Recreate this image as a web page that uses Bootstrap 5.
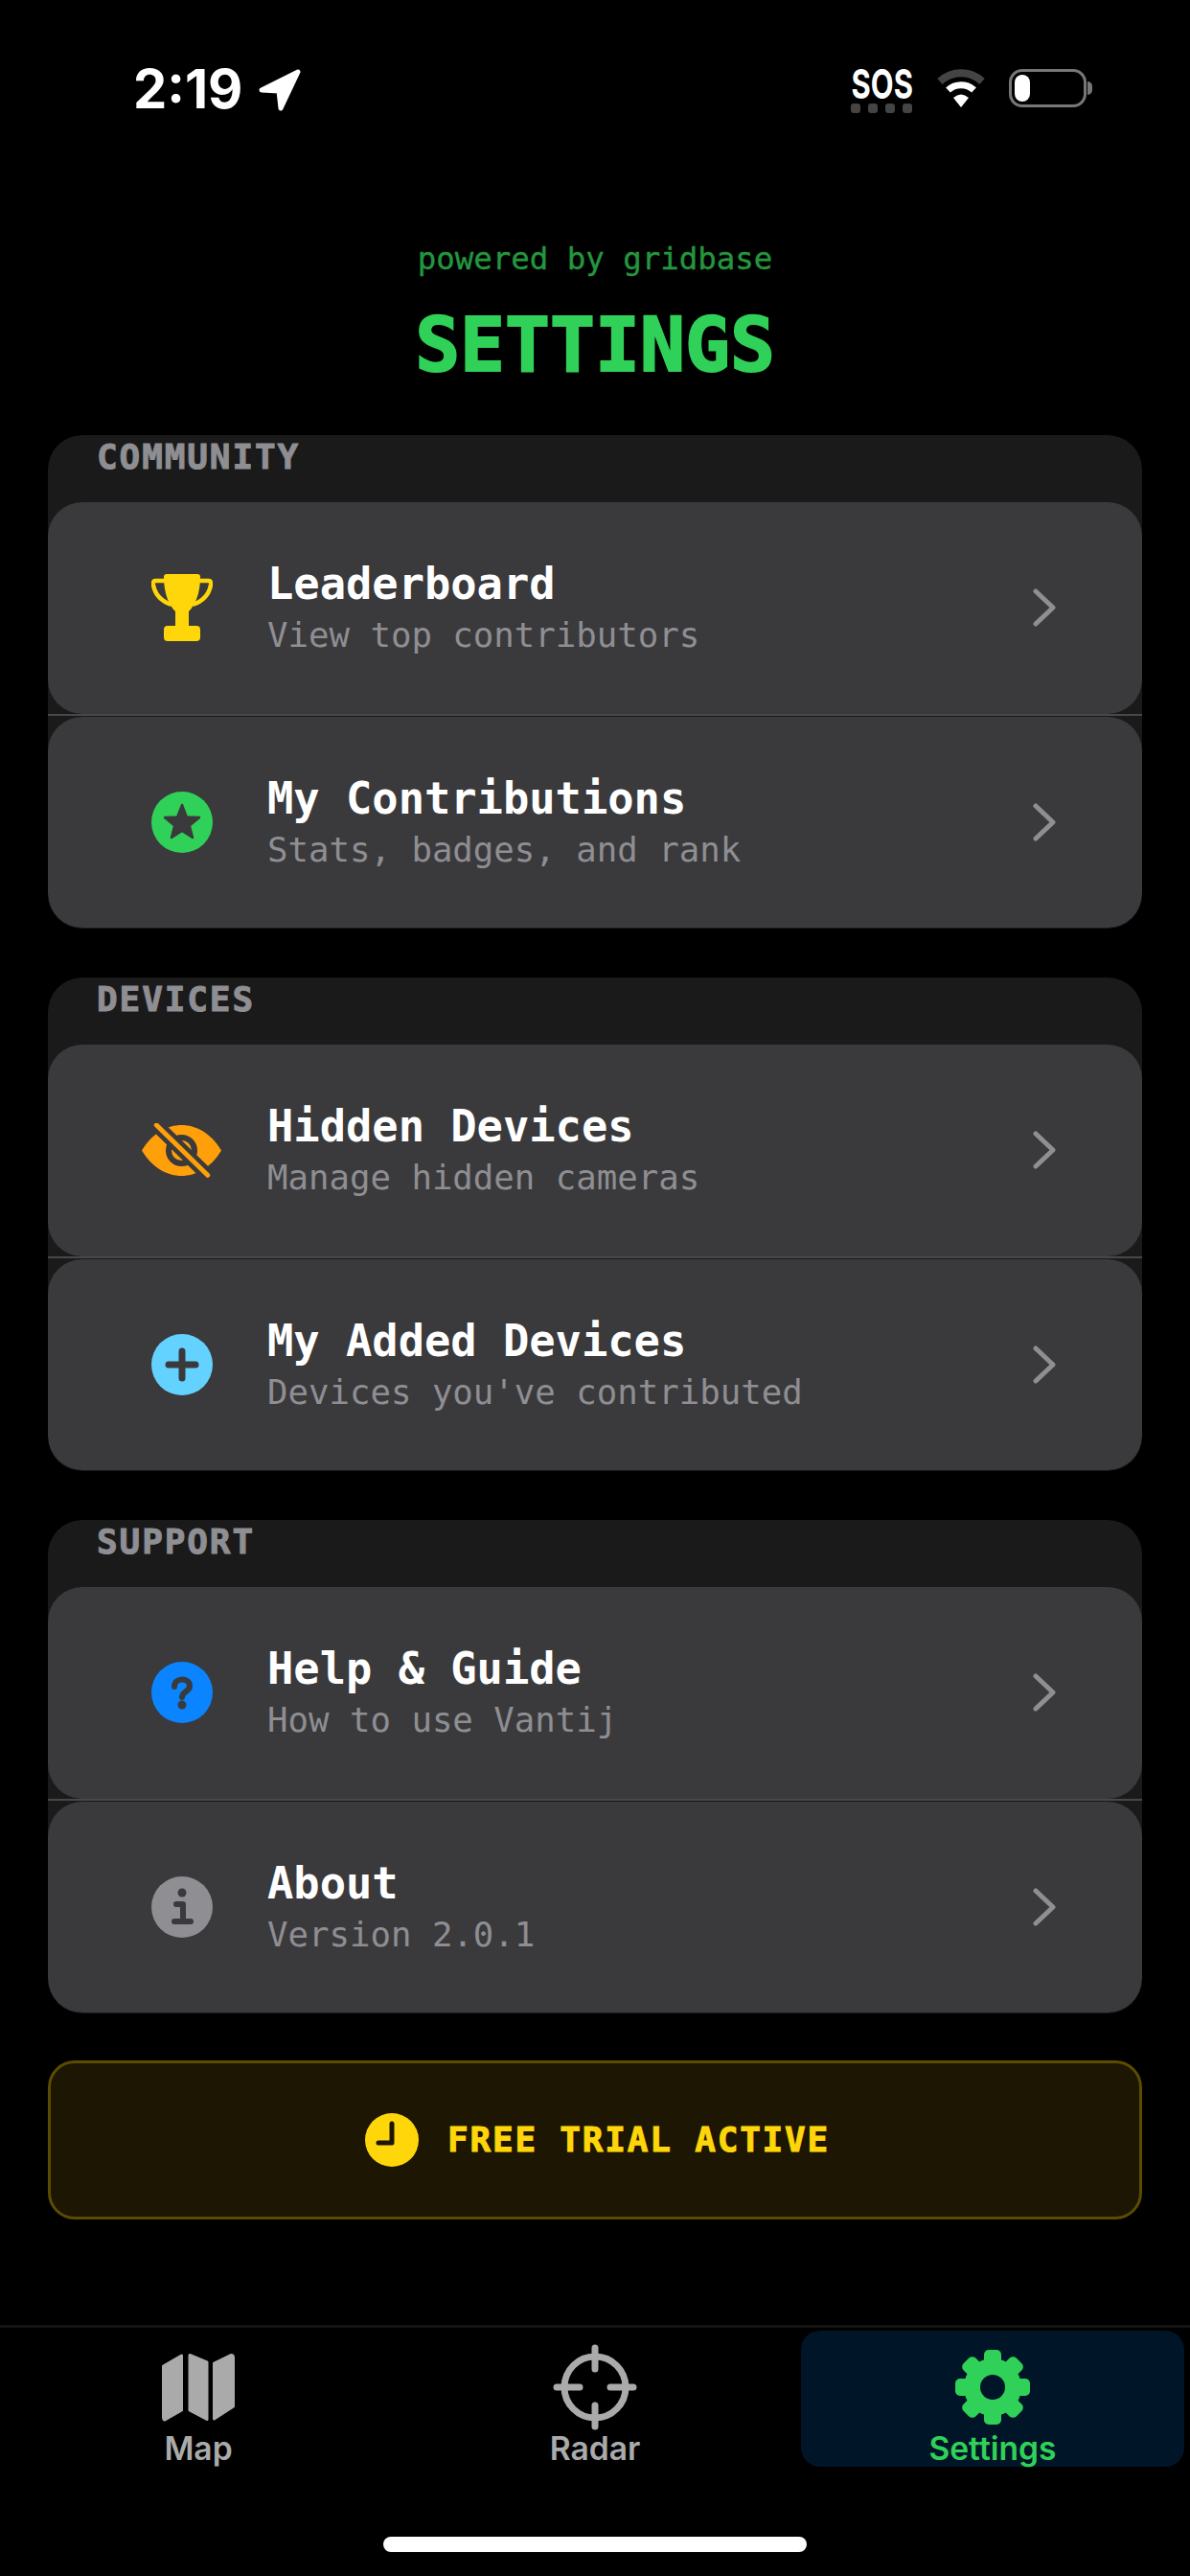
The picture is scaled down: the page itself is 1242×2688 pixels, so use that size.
<!DOCTYPE html>
<html lang="en">
<head>
    <meta charset="UTF-8">
    <meta name="viewport" content="width=device-width, initial-scale=1.0">
    <title>Settings</title>
    <link href="https://cdn.jsdelivr.net/npm/bootstrap@5.3.0/dist/css/bootstrap.min.css" rel="stylesheet">
    <style>
        body {
            background-color: #000;
            margin: 0;
            font-family: "DejaVu Sans Mono", monospace;
        }

        .screen {
            height: 2688px;
        }

        /* status bar */
        .status-row {
            height: 250px;
            padding: 72px 102px 0 139px;
            font-family: Inter, sans-serif;
        }

        .clock-time {
            font-size: 56px;
            font-weight: 700;
            line-height: 42px;
            color: #fff;
        }

        .sos-text {
            font-size: 43px;
            font-weight: 700;
            line-height: 30px;
            color: #fff;
            margin: 0 -12px;
            transform: scaleX(.72);
        }

        .sos-dots {
            gap: 8px;
            margin-top: 6px;
        }

        .sos-dots span {
            width: 10px;
            height: 10px;
            border-radius: 3px;
            background-color: #444;
        }

        .battery-shell {
            width: 81px;
            height: 40px;
            border: 3px solid #777;
            border-radius: 14px;
            padding: 3px;
        }

        .battery-level {
            width: 16px;
            height: 28px;
            background-color: #fff;
            border-radius: 8px;
        }

        .battery-tip {
            width: 5px;
            height: 14px;
            background-color: #777;
            border-radius: 0 6px 6px 0;
            margin-left: 1px;
        }

        /* heading */
        .powered-by {
            font-size: 32.4px;
            line-height: 40px;
            color: #23963f;
            -webkit-text-stroke: .4px #23963f;
        }

        .page-title {
            font-size: 78px;
            font-weight: 700;
            line-height: 80px;
            color: #30d158;
            -webkit-text-stroke: 2px #30d158;
            margin: 30px 0 54px;
        }

        /* sections */
        .settings-group {
            margin: 0 50px 51px;
            height: 515px;
            background-color: #1a1a1b;
            border-radius: 36px;
            overflow: hidden;
        }

        .group-label {
            height: 70px;
            padding: 0 51px;
            font-size: 36px;
            font-weight: 700;
            letter-spacing: 1.9px;
            line-height: 45px;
            color: #8e8e93;
            -webkit-text-stroke: 1px #8e8e93;
        }

        .settings-row {
            height: 220.5px;
            background-color: #3a3a3c;
            border-radius: 36px;
            padding-right: 90px;
        }

        .row-rule {
            height: 2px;
            background-color: #48484a;
            margin-bottom: 1px;
        }

        .row-icon {
            width: 229px;
            padding-left: 50px;
            flex-shrink: 0;
        }

        .row-title {
            font-size: 45.4px;
            font-weight: 700;
            line-height: 54px;
            color: #fff;
        }

        .row-sub {
            font-size: 35.7px;
            line-height: 44px;
            color: #8e8e93;
            margin-top: 4px;
        }

        /* trial banner */
        .trial-banner {
            height: 166px;
            margin: -2px 50px 0;
            padding-left: 5px;
            background-color: #1c1603;
            border: 3px solid #5a4c00;
            border-radius: 28px;
            gap: 30px;
        }

        .trial-text {
            font-size: 36px;
            font-weight: 700;
            letter-spacing: 1.8px;
            color: #ffd60a;
            -webkit-text-stroke: 1px #ffd60a;
        }

        /* tab bar */
        .tab-strip {
            border-top: 3px solid #141414;
            height: 262px;
            padding-top: 3px;
            font-family: Inter, sans-serif;
        }

        .tab-item {
            height: 142px;
            font-size: 33.6px;
            font-weight: 600;
            color: #aaa;
            border-radius: 20px;
        }

        .tab-item svg {
            height: 90px;
        }

        .tab-item.is-current {
            margin: 0 6px 0 8px;
            background-color: #001528;
            color: #30d158;
        }

        .tab-name {
            line-height: 38px;
        }

        .home-bar {
            width: 442px;
            height: 16px;
            margin-top: 73px;
            background-color: #fff;
            border-radius: 8px;
        }
    </style>
</head>
<body>
<div class="screen d-flex flex-column">

    <!-- status bar -->
    <div class="status-row d-flex justify-content-between align-items-start flex-shrink-0">
        <div class="d-flex align-items-start gap-3">
            <span class="clock-time">2:19</span>
            <svg width="44" height="44" viewBox="0 0 44 44"><path d="M3 22 L41 3 L23 41 L21 23 Z" fill="#fff" stroke="#fff" stroke-width="5" stroke-linejoin="round"/></svg>
        </div>
        <div class="d-flex align-items-start">
            <div class="d-flex flex-column align-items-center">
                <span class="sos-text">SOS</span>
                <div class="sos-dots d-flex"><span></span><span></span><span></span><span></span></div>
            </div>
            <svg class="mx-4" width="52" height="40" viewBox="0 0 52 40" fill="none">
                <path d="M4 13 A32 32 0 0 1 48 13" stroke="#444" stroke-width="8"/>
                <path d="M12.500 22 A20 20 0 0 1 39.500 22" stroke="#fff" stroke-width="7"/>
                <path d="M18 30 Q26 23 34 30 L26 40 Z" fill="#fff"/>
            </svg>
            <div class="d-flex align-items-center">
                <div class="battery-shell"><div class="battery-level"></div></div>
                <div class="battery-tip"></div>
            </div>
        </div>
    </div>

    <!-- heading -->
    <div class="text-center flex-shrink-0">
        <div class="powered-by">powered by gridbase</div>
        <div class="page-title">SETTINGS</div>
    </div>

    <!-- community -->
    <section class="settings-group">
        <div class="group-label">COMMUNITY</div>
        <div class="settings-row d-flex align-items-center">
            <div class="row-icon d-flex justify-content-center">
                <svg width="64" height="70" viewBox="0 0 64 70">
                    <path d="M14 7 H4 Q1.500 7 2 11 C3.500 21 10 28 21 32 M50 7 H60 Q62.500 7 62 11 C60.500 21 54 28 43 32" fill="none" stroke="#ffd60a" stroke-width="4.500"/>
                    <path d="M16 0 H48 Q51 0 51 3 C51 20 46 32 39 39 V54 H47 Q51 54 51 58 V66 Q51 70 47 70 H17 Q13 70 13 66 V58 Q13 54 17 54 H25 V39 C18 32 13 20 13 3 Q13 0 16 0 Z" fill="#ffd60a"/>
                </svg>
            </div>
            <div class="flex-grow-1">
                <div class="row-title">Leaderboard</div>
                <div class="row-sub">View top contributors</div>
            </div>
            <svg width="24" height="40" viewBox="0 0 24 40" fill="none"><path d="M3 3 L21 20 L3 37" stroke="#8e8e93" stroke-width="5" stroke-linecap="round" stroke-linejoin="round"/></svg>
        </div>
        <div class="row-rule"></div>
        <div class="settings-row d-flex align-items-center">
            <div class="row-icon d-flex justify-content-center">
                <svg width="64" height="64" viewBox="0 0 64 64">
                    <circle cx="32" cy="32" r="32" fill="#30d158"/>
                    <path d="M32 14 L36.800 26.500 L50 27 L39.800 35.500 L43 48 L32 41 L21 48 L24.200 35.500 L14 27 L27.200 26.500 Z" fill="#3a3a3c" stroke="#3a3a3c" stroke-width="2.500" stroke-linejoin="round"/>
                </svg>
            </div>
            <div class="flex-grow-1">
                <div class="row-title">My Contributions</div>
                <div class="row-sub">Stats, badges, and rank</div>
            </div>
            <svg width="24" height="40" viewBox="0 0 24 40" fill="none"><path d="M3 3 L21 20 L3 37" stroke="#8e8e93" stroke-width="5" stroke-linecap="round" stroke-linejoin="round"/></svg>
        </div>
    </section>

    <!-- devices -->
    <section class="settings-group">
        <div class="group-label">DEVICES</div>
        <div class="settings-row d-flex align-items-center">
            <div class="row-icon d-flex justify-content-center">
                <svg width="85" height="57" viewBox="0 0 85 57">
                    <path d="M1 28.500 C12 10 28 2 42.500 2 C57 2 73 10 84 28.500 C73 47 57 55 42.500 55 C28 55 12 47 1 28.500 Z" fill="#ff9f0a"/>
                    <circle cx="42.500" cy="28.500" r="13.500" fill="#ff9f0a" stroke="#3a3a3c" stroke-width="6"/>
                    <path d="M16.300 2 L69.700 54.300" stroke="#3a3a3c" stroke-width="14"/>
                    <path d="M16.300 2 L69.700 54.300" stroke="#ff9f0a" stroke-width="5" stroke-linecap="round"/>
                </svg>
            </div>
            <div class="flex-grow-1">
                <div class="row-title">Hidden Devices</div>
                <div class="row-sub">Manage hidden cameras</div>
            </div>
            <svg width="24" height="40" viewBox="0 0 24 40" fill="none"><path d="M3 3 L21 20 L3 37" stroke="#8e8e93" stroke-width="5" stroke-linecap="round" stroke-linejoin="round"/></svg>
        </div>
        <div class="row-rule"></div>
        <div class="settings-row d-flex align-items-center">
            <div class="row-icon d-flex justify-content-center">
                <svg width="64" height="64" viewBox="0 0 64 64">
                    <circle cx="32" cy="32" r="32" fill="#64d2ff"/>
                    <path d="M32 18 V46 M18 32 H46" stroke="#3a3a3c" stroke-width="7" stroke-linecap="round"/>
                </svg>
            </div>
            <div class="flex-grow-1">
                <div class="row-title">My Added Devices</div>
                <div class="row-sub">Devices you've contributed</div>
            </div>
            <svg width="24" height="40" viewBox="0 0 24 40" fill="none"><path d="M3 3 L21 20 L3 37" stroke="#8e8e93" stroke-width="5" stroke-linecap="round" stroke-linejoin="round"/></svg>
        </div>
    </section>

    <!-- support -->
    <section class="settings-group">
        <div class="group-label">SUPPORT</div>
        <div class="settings-row d-flex align-items-center">
            <div class="row-icon d-flex justify-content-center">
                <svg width="64" height="64" viewBox="0 0 64 64">
                    <circle cx="32" cy="32" r="32" fill="#0a84ff"/>
                    <path d="M24 26 C24 16 40 16 40 25.500 C40 31 32 31 32 37" fill="none" stroke="#3a3a3c" stroke-width="6" stroke-linecap="round"/>
                    <circle cx="32" cy="45" r="4.500" fill="#3a3a3c"/>
                </svg>
            </div>
            <div class="flex-grow-1">
                <div class="row-title">Help &amp; Guide</div>
                <div class="row-sub">How to use Vantij</div>
            </div>
            <svg width="24" height="40" viewBox="0 0 24 40" fill="none"><path d="M3 3 L21 20 L3 37" stroke="#8e8e93" stroke-width="5" stroke-linecap="round" stroke-linejoin="round"/></svg>
        </div>
        <div class="row-rule"></div>
        <div class="settings-row d-flex align-items-center">
            <div class="row-icon d-flex justify-content-center">
                <svg width="64" height="64" viewBox="0 0 64 64">
                    <circle cx="32" cy="32" r="32" fill="#8e8e93"/>
                    <circle cx="32" cy="17" r="4.500" fill="#3a3a3c"/>
                    <path d="M26 29 H33 V47 M24 47 H41" fill="none" stroke="#3a3a3c" stroke-width="6" stroke-linecap="round" stroke-linejoin="round"/>
                </svg>
            </div>
            <div class="flex-grow-1">
                <div class="row-title">About</div>
                <div class="row-sub">Version 2.0.1</div>
            </div>
            <svg width="24" height="40" viewBox="0 0 24 40" fill="none"><path d="M3 3 L21 20 L3 37" stroke="#8e8e93" stroke-width="5" stroke-linecap="round" stroke-linejoin="round"/></svg>
        </div>
    </section>

    <!-- trial -->
    <div class="trial-banner d-flex align-items-center justify-content-center flex-shrink-0">
        <svg width="56" height="56" viewBox="0 0 56 56">
            <circle cx="28" cy="28" r="28" fill="#ffd60a"/>
            <path d="M28 11 V31 H14" fill="none" stroke="#1c1603" stroke-width="5" stroke-linecap="round" stroke-linejoin="round"/>
        </svg>
        <span class="trial-text">FREE TRIAL ACTIVE</span>
    </div>

    <!-- tab bar -->
    <div class="mt-auto tab-strip flex-shrink-0">
        <div class="row g-0">
            <div class="col-4">
                <div class="tab-item d-flex flex-column align-items-center justify-content-end">
                    <svg width="76" height="90" viewBox="0 -10 76 90">
                        <path d="M1.500 13 L20.500 2 V59 L3 69 Q1.500 69 1.500 66 Z M29 1.500 L47 9 V68.500 L29 59 Z M54.500 10 L72 1.500 Q74.500 1.500 74.500 4 V55 L54.500 68 Z" fill="#aaa" stroke="#aaa" stroke-width="3" stroke-linejoin="round"/>
                    </svg>
                    <span class="tab-name">Map</span>
                </div>
            </div>
            <div class="col-4">
                <div class="tab-item d-flex flex-column align-items-center justify-content-end">
                    <svg width="88" height="90" viewBox="0 0 88 90" fill="none" stroke="#aaa" stroke-width="7" stroke-linecap="round">
                        <circle cx="44" cy="45" r="32"/>
                        <path d="M44 4 V26 M44 64 V86 M4 45 H28 M60 45 H84"/>
                    </svg>
                    <span class="tab-name">Radar</span>
                </div>
            </div>
            <div class="col-4">
                <div class="tab-item is-current d-flex flex-column align-items-center justify-content-end">
                    <svg width="80" height="90" viewBox="-40 -45 80 90">
                        <g fill="#30d158">
                            <circle r="30"/>
                            <rect x="-9" y="-39" width="18" height="78" rx="5"/>
                            <rect x="-9" y="-39" width="18" height="78" rx="5" transform="rotate(45)"/>
                            <rect x="-9" y="-39" width="18" height="78" rx="5" transform="rotate(90)"/>
                            <rect x="-9" y="-39" width="18" height="78" rx="5" transform="rotate(135)"/>
                        </g>
                        <circle r="13" fill="#001528"/>
                    </svg>
                    <span class="tab-name">Settings</span>
                </div>
            </div>
        </div>
        <div class="home-bar mx-auto"></div>
    </div>
</div>
<script src="https://cdn.jsdelivr.net/npm/bootstrap@5.3.0/dist/js/bootstrap.bundle.min.js"></script>
</body>
</html>
